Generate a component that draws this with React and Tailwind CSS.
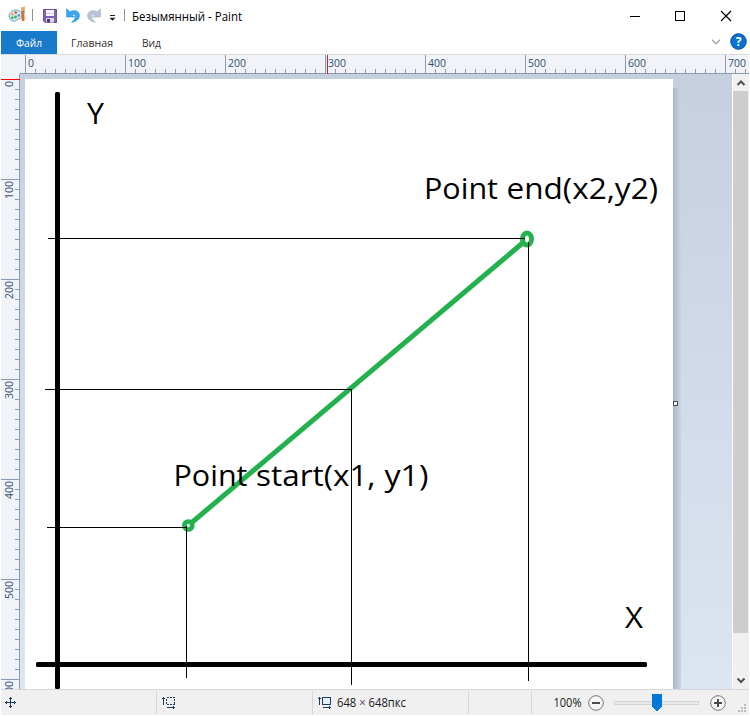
const FONT = 'font-["Open_Sans","Noto_Sans",sans-serif]';

const range = (n) => Array.from({ length: n }, (_, i) => i);

function PaintLogo() {
  return (
    <svg width="18" height="17" viewBox="0 0 18 17" className="shrink-0">
      <path d="M8 4C4 4 1 6.800 1 10c0 3.300 2.600 5.300 5.600 5.200 2-.1 2-1.500 3.400-2.100 1.600-.6 3.900.1 3.900-3.100C13.900 6.200 11.500 4 8 4z" fill="#d3e9f5" stroke="#6aa5c9" strokeWidth="1" />
      <circle cx="4.300" cy="8.300" r="1.300" fill="#f2a33c" />
      <circle cx="7.800" cy="6.600" r="1.300" fill="#e5553c" />
      <circle cx="4.300" cy="11.800" r="1.300" fill="#41a350" />
      <circle cx="7.500" cy="11" r="1.400" fill="#41b350" />
      <circle cx="10.800" cy="9.500" r="1.200" fill="#4b83cc" />
      <path d="M13 .500l1.500 1L16.800.300V5h-3.600z" fill="#e0a76c" />
      <path d="M13.600 6.500h2.700l.3 7.500c0 1.600-3 1.600-3 0z" fill="#d96f2c" />
      <path d="M13.200 5h3.500v1.600h-3.500z" fill="#8b7668" />
    </svg>
  );
}

function SaveIcon() {
  return (
    <svg width="14" height="14" viewBox="0 0 14 14" className="shrink-0">
      <path d="M.5.500h13v13H2L.5 12z" fill="#7f62b3" stroke="#6c529b" />
      <path d="M3 1h8v6H3z" fill="#f7f5fa" />
      <path d="M3 4.500h8" stroke="#d5cde2" />
      <path d="M3 9h8v4.500H3z" fill="#dcd7e6" />
      <path d="M4 10h3v3.500H4z" fill="#4c3a6c" />
    </svg>
  );
}

function TurnArrow({ fill, stroke, flip }) {
  return (
    <svg width="14" height="15" viewBox="0 0 14 15" className={flip ? 'shrink-0 -scale-x-100' : 'shrink-0'}>
      <path d="M.6.800V9h8L5.900 6.400c2-.5 3.500.3 3.500 2.200 0 1.900-1.400 3.700-3.700 5.600 4.500-.6 7.700-3 7.700-6.700 0-4.400-5.200-6.200-9.700-3.700z" fill={fill} stroke={stroke} strokeWidth=".7" strokeLinejoin="round" />
    </svg>
  );
}

function TitleBar() {
  return (
    <header className="flex h-[31px] shrink-0 items-center pl-2 text-[12px] text-black">
      <div className="-mt-[3px] flex"><PaintLogo /></div>
      <i className="-mt-[2px] ml-[6px] h-3 w-px bg-[#8f8f8f]" />
      <div className="ml-[10px] flex"><SaveIcon /></div>
      <div className="ml-[9px] flex"><TurnArrow fill="#3aa9ee" stroke="#2b94db" /></div>
      <div className="ml-[7px] flex"><TurnArrow fill="#b9c4d6" stroke="#a9b6ca" flip /></div>
      <svg width="7" height="7" className="mt-[4px] ml-[8px] shrink-0">
        <path d="M1 1.500h5" stroke="#222" shapeRendering="crispEdges" />
        <path d="M.500 3.800h6L3.500 6.800z" fill="#222" />
      </svg>
      <i className="-mt-[2px] ml-[8px] h-3 w-px bg-[#8f8f8f]" />
      <svg width="120" height="20" className={`ml-[7px] shrink-0 ${FONT}`}>
        <text x="0" y="14.500" fontSize="12" textLength="110" lengthAdjust="spacingAndGlyphs">Безымянный - Paint</text>
      </svg>
      <svg width="106" height="12" className="mr-[17px] ml-auto" fill="none" stroke="#000" shapeRendering="crispEdges">
        <path d="M3 6.500h10M48.500 1.500h9v9h-9z" />
        <path d="M94 1l10 10M104 1l-10 10" shapeRendering="auto" strokeWidth="1.200" />
      </svg>
    </header>
  );
}

function Tab({ label, width, box, x, file }) {
  return (
    <svg height="23" width={box} className={file ? `bg-[#1979ca] ${FONT}` : FONT}>
      <text x={x} y="16" fontSize="11.500" fill={file ? '#fff' : '#333'} textLength={width} lengthAdjust="spacingAndGlyphs">{label}</text>
    </svg>
  );
}

function Tabs() {
  return (
    <nav className="flex h-[24px] shrink-0 border-b border-[#dadbdc] pl-px">
      <Tab label="Файл" width={26} x={15} box={56} file />
      <Tab label="Главная" width={42} x={14} box={70} />
      <Tab label="Вид" width={19} x={15} box={50} />
      <svg width="10" height="6" className="mt-[8px] mr-[9px] ml-auto"><path d="M1 .800l4 4 4-4" fill="none" stroke="#a3a3a3" strokeWidth="1.300" /></svg>
      <svg width="17" height="17" className={`mt-[2px] mr-[3px] ${FONT}`}>
        <circle cx="8.500" cy="8.500" r="7.800" fill="#0871d1" stroke="#0b4fa0" />
        <text x="8.500" y="13" textAnchor="middle" fontSize="12" fontWeight="700" fill="#fff">?</text>
      </svg>
    </nav>
  );
}

function HorizontalRuler() {
  return (
    <svg width="748" height="19" className={`mx-px shrink-0 bg-[#f1f3f9] ${FONT}`} shapeRendering="crispEdges">
      {range(73).map((i) => (
        <path key={i} d={`M${24.5 + i * 10} ${i % 10 ? 14 : 0}V19`} stroke="#8c9bb0" />
      ))}
      <path d="M19 18.500h729" stroke="#8c9bb0" />
      {range(8).map((i) => (
        <text key={i} x={27 + i * 100} y="12" fontSize="11" fill="#32506f" textLength={i ? 18 : 6} lengthAdjust="spacingAndGlyphs">{i * 100}</text>
      ))}
      <path d="M326 0h1v19h-1z" fill="#e9141d" />
    </svg>
  );
}

function VerticalRuler() {
  return (
    <svg width="19" height="615" className={`ml-px shrink-0 bg-[#f1f3f9] ${FONT}`} shapeRendering="crispEdges">
      {range(61).map((i) => (
        <path key={i} d={`M${i % 10 ? 14 : 0} ${5.5 + i * 10}H19`} stroke="#8c9bb0" />
      ))}
      <path d="M18.500 0v615" stroke="#8c9bb0" />
      {range(7).map((i) => (
        <text key={i} transform={`translate(12 ${(i ? 25 : 13) + i * 100}) rotate(-90)`} fontSize="11" fill="#32506f" textLength={i ? 18 : 6} lengthAdjust="spacingAndGlyphs">{i * 100}</text>
      ))}
      <path d="M0 5h19v1H0z" fill="#f00" />
    </svg>
  );
}

function CanvasText({ x, y, width, children }) {
  return <text x={x} y={y} fontSize="30" fill="#000" textLength={width} lengthAdjust="spacingAndGlyphs">{children}</text>;
}

function Drawing() {
  return (
    <svg width="648" height="610" viewBox="25 79 648 610" className={`shrink-0 bg-white ${FONT}`}>
      <g fill="#000">
        <rect x="55" y="92" width="5" height="597" rx="1.500" />
        <rect x="36" y="662" width="611" height="5" rx="1.500" />
      </g>
      <g fill="none" stroke="#22b14c" strokeWidth="5">
        <path d="M190 524L525 241" />
        <circle cx="188.300" cy="525.500" r="4" strokeWidth="4.600" />
        <ellipse cx="527" cy="239" rx="4.500" ry="6" />
      </g>
      <g stroke="#000" fill="none" shapeRendering="crispEdges">
        <path d="M48 238.500H525M45 389.500H352M47 527.500H187M186.500 526V678M351.500 389V685M528.500 242V681" />
      </g>
      <CanvasText x={87} y={124} width={17}>Y</CanvasText>
      <CanvasText x={625} y={628} width={18}>X</CanvasText>
      <CanvasText x={424} y={199} width={74}>Point</CanvasText>
      <CanvasText x={506.5} y={199} width={151.5}>end(x2,y2)</CanvasText>
      <CanvasText x={173.5} y={486} width={74}>Point</CanvasText>
      <CanvasText x={256} y={486} width={119.5}>start(x1,</CanvasText>
      <CanvasText x={384.5} y={486} width={44}>y1)</CanvasText>
    </svg>
  );
}

function ScrollBar() {
  return (
    <div className="flex w-[17px] shrink-0 flex-col items-center border-l border-white bg-[#f0f0f0]">
      <svg width="16" height="17" className="shrink-0"><path d="M4.500 11L8 7.500l3.500 3.500" fill="none" stroke="#505050" strokeWidth="2" /></svg>
      <div className="mr-px h-[542px] w-[15px] shrink-0 bg-[#cdcdcd]" />
      <svg width="16" height="17" className="mt-auto mb-px shrink-0"><path d="M4.500 7.500L8 11l3.500-3.500" fill="none" stroke="#505050" strokeWidth="2" /></svg>
    </div>
  );
}

function Workspace() {
  return (
    <main className="flex h-[615px] shrink-0 overflow-hidden">
      <VerticalRuler />
      <div className="flex min-w-0 flex-1 bg-linear-to-b from-[#c5cfe0] to-[#dce6f2] pt-[5px] pl-[5px]">
        <Drawing />
        <div className="relative mt-[9px] w-2 shrink-0 bg-linear-to-r from-[#a9b7cd] to-[#c9d5e5]">
          <i className="absolute top-[313px] left-0 h-[5px] w-[5px] border border-[#444955] bg-white" />
        </div>
      </div>
      <ScrollBar />
      <div className="w-px shrink-0 bg-white" />
    </main>
  );
}

function SizeIcon({ dashed }) {
  return (
    <svg width="14" height="14" fill="none" stroke="#1f3b63" shapeRendering="crispEdges" className="shrink-0">
      <path d="M1.500 1v8M0 2.500h3M5 11.500h8M11.500 10v3" />
      <path d="M4.500 1.500h8v7h-8z" fill={dashed ? 'none' : '#e4f0fa'} strokeDasharray={dashed ? '2 1' : undefined} />
    </svg>
  );
}

function ZoomButton({ plus }) {
  return (
    <svg width="16" height="16" className="shrink-0" fill="none">
      <circle cx="8" cy="8" r="7.300" fill="#f7f7f7" stroke="#777" />
      <path d={plus ? 'M4 8h8M8 4v8' : 'M4 8h8'} stroke="#4b4b4b" strokeWidth="2" />
    </svg>
  );
}

function StatusBar() {
  return (
    <footer className="mx-px flex h-[26px] shrink-0 border-t border-[#d7d7d7] bg-[#f0f0f0]">
      <div className="my-px flex w-[156px] items-center border-r border-[#d7d7d7] pl-1">
        <svg width="11" height="11" fill="none" stroke="#1f3b63" shapeRendering="crispEdges">
          <path d="M5.500 0v11M0 5.500h11M4 1.500h3M4 9.500h3M1.500 4v3M9.500 4v3" />
        </svg>
      </div>
      <div className="my-px flex w-[156px] items-center border-r border-[#d7d7d7] pl-[5px]"><SizeIcon dashed /></div>
      <div className="my-px flex w-[156px] items-center border-r border-[#d7d7d7] pl-[5px]">
        <SizeIcon />
        <svg width="80" height="20" className={`ml-[5px] shrink-0 ${FONT}`}>
          <text x="0" y="14" fontSize="12" fill="#1a1a1a" textLength="69" lengthAdjust="spacingAndGlyphs">648 <tspan fill="#6b2d5c">×</tspan> 648пкс</text>
        </svg>
      </div>
      <div className="my-px w-[63px] border-r border-[#d7d7d7]" />
      <div className="flex flex-1 items-center pl-[21px]">
        <svg width="30" height="20" className={FONT}>
          <text x="0.500" y="14" fontSize="12" fill="#1a1a1a" textLength="28" lengthAdjust="spacingAndGlyphs">100%</text>
        </svg>
        <div className="ml-[5px] flex"><ZoomButton /></div>
        <svg width="86" height="18" className="ml-[10px] shrink-0" shapeRendering="crispEdges">
          <path d="M.500 7.500h84v3h-84z" fill="#e7eaea" stroke="#d4d6d6" />
          <path d="M38 0h10v13l-5 4-5-4z" fill="#0078d7" />
        </svg>
        <div className="ml-[10px] flex"><ZoomButton plus /></div>
        <svg width="9" height="9" className="mt-auto mr-[2px] mb-[2px] ml-auto shrink-0" fill="#bcbcbc">
          <path d="M6 0h2v2H6zM3 3h2v2H3zM6 3h2v2H6zM0 6h2v2H0zM3 6h2v2H3zM6 6h2v2H6z" />
        </svg>
      </div>
    </footer>
  );
}

export default function App() {
  return (
    <div className={`flex h-[716px] w-[750px] flex-col overflow-hidden bg-white ${FONT}`}>
      <TitleBar />
      <Tabs />
      <HorizontalRuler />
      <Workspace />
      <StatusBar />
    </div>
  );
}
